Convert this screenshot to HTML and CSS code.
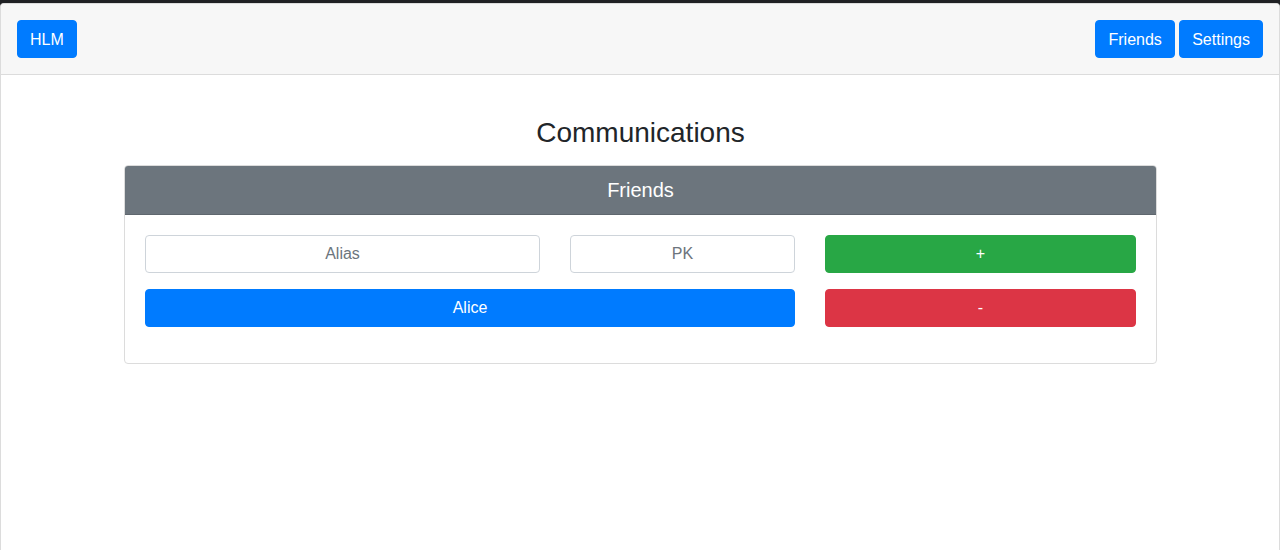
FILE: index.html
```html
<!DOCTYPE html>
<html lang="en">
<head>
<meta charset="utf-8">
<title>HLM</title>
<link rel="stylesheet" href="styles.css">
</head>
<body>
<div class="frame">
  <nav class="navbar">
    <button class="btn btn-primary">HLM</button>
    <div class="nav-right">
      <button class="btn btn-primary btn-friends">Friends</button>
      <button class="btn btn-primary">Settings</button>
    </div>
  </nav>
  <main class="main">
    <h1 class="title">Communications</h1>
    <section class="card">
      <header class="card-header">Friends</header>
      <div class="card-body">
        <input class="input" type="text" placeholder="Alias">
        <input class="input" type="text" placeholder="PK">
        <button class="btn btn-success">+</button>
        <button class="btn btn-primary span-2">Alice</button>
        <button class="btn btn-danger">-</button>
      </div>
    </section>
  </main>
</div>
</body>
</html>
```

FILE: styles.css
```css
* { box-sizing: border-box; }
html, body { margin: 0; padding: 0; }
body {
  background: #202124;
  font-family: "Liberation Sans", Arial, sans-serif;
  color: #212529;
  font-size: 16px;
  line-height: 1.5;
}
.frame {
  margin-top: 3px;
  min-height: calc(100vh - 3px);
  background: #fff;
  border: 1px solid #dcdcdc;
  border-bottom: none;
  border-radius: 4px 4px 0 0;
  overflow: hidden;
}
.navbar {
  display: flex;
  justify-content: space-between;
  align-items: center;
  padding: 16px;
  background: #f7f7f7;
  border-bottom: 1px solid #dcdcdc;
}
.nav-right { display: flex; gap: 4px; }
.btn {
  font-family: inherit;
  font-size: 16px;
  line-height: 24px;
  padding: 6px 12px 6px;
  border: 1px solid transparent;
  border-radius: 4px;
  color: #fff;
  cursor: pointer;
  text-align: center;
}
.navbar .btn { padding: 7px 12px 5px; }
.navbar .btn-friends { min-width: 80px; }
.btn-primary { background: #007bff; border-color: #007bff; }
.btn-success { background: #28a745; border-color: #28a745; }
.btn-danger { background: #dc3545; border-color: #dc3545; }
.main { padding: 41px 122px 0 123px; }
.title {
  margin: 0 0 15px;
  font-size: 28px;
  font-weight: 400;
  line-height: 1.2;
  text-align: center;
}
.card {
  border: 1px solid #dcdcdc;
  border-radius: 4px;
  overflow: hidden;
}
.card-header {
  background: #6c757d;
  color: #fff;
  font-size: 20px;
  line-height: 24px;
  padding: 12px 20px;
  text-align: center;
  border-bottom: 1px solid #5f676e;
}
.card-body {
  padding: 20px 20px 20px;
  display: grid;
  grid-template-columns: minmax(0, 395fr) minmax(0, 225fr) minmax(0, 311fr);
  column-gap: 30px;
}
.card-body > * { margin-bottom: 16px; min-width: 0; width: 100%; }
.input {
  font-family: inherit;
  font-size: 16px;
  line-height: 24px;
  height: 38px;
  padding: 6px 12px;
  border: 1px solid #ced4da;
  border-radius: 4px;
  color: #495057;
  text-align: center;
  background: #fff;
}
.input::placeholder { color: #6c757d; opacity: 1; }
.span-2 { grid-column: span 2; }
```
